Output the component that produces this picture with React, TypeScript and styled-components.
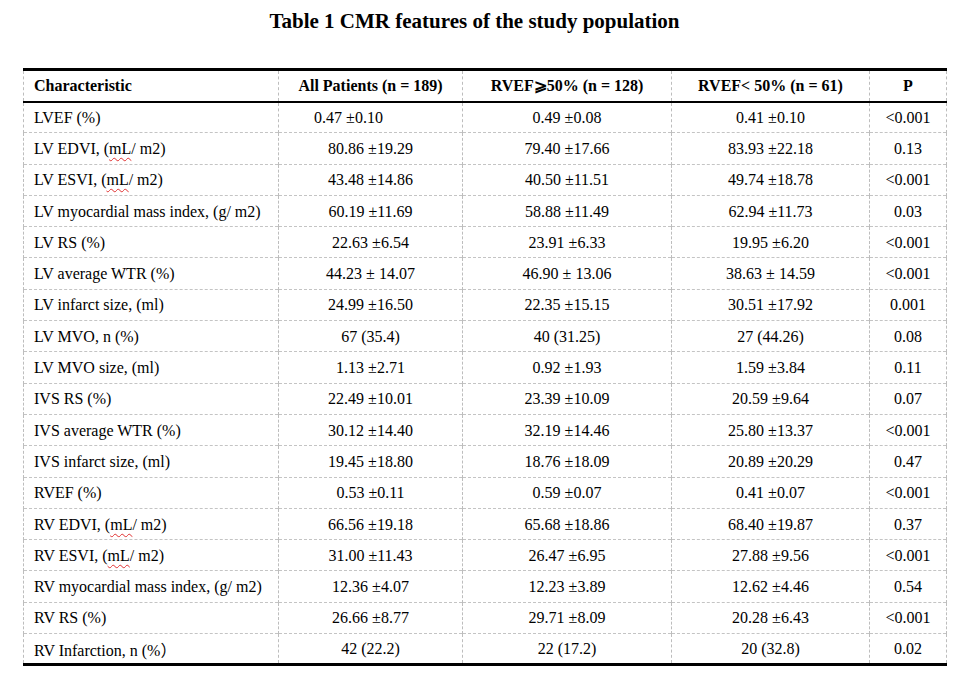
import styled, { createGlobalStyle } from "styled-components";

const GlobalStyle = createGlobalStyle`
  body {
    margin: 0;
    background: #ffffff;
    font-family: "Liberation Serif", "Times New Roman", "Noto Sans CJK SC", serif;
    color: #000000;
  }
`;

type Row = {
  label: React.ReactNode;
  all: string;
  preserved: string;
  reduced: string;
  p: string;
  shiftAll?: boolean;
};

const Squiggle = styled.span`
  text-decoration: underline wavy #e03030;
  text-decoration-thickness: 1px;
  text-underline-offset: 3px;
`;

const rows: Row[] = [
  { label: "LVEF (%)", all: "0.47 ±0.10", preserved: "0.49 ±0.08", reduced: "0.41 ±0.10", p: "<0.001", shiftAll: true },
  { label: <>LV EDVI, (<Squiggle>mL</Squiggle>/ m2)</>, all: "80.86 ±19.29", preserved: "79.40 ±17.66", reduced: "83.93 ±22.18", p: "0.13" },
  { label: <>LV ESVI, (<Squiggle>mL</Squiggle>/ m2)</>, all: "43.48 ±14.86", preserved: "40.50 ±11.51", reduced: "49.74 ±18.78", p: "<0.001" },
  { label: "LV myocardial mass index, (g/ m2)", all: "60.19 ±11.69", preserved: "58.88 ±11.49", reduced: "62.94 ±11.73", p: "0.03" },
  { label: "LV RS (%)", all: "22.63 ±6.54", preserved: "23.91 ±6.33", reduced: "19.95 ±6.20", p: "<0.001" },
  { label: "LV average WTR (%)", all: "44.23 ± 14.07", preserved: "46.90 ± 13.06", reduced: "38.63 ± 14.59", p: "<0.001" },
  { label: "LV infarct size, (ml)", all: "24.99 ±16.50", preserved: "22.35 ±15.15", reduced: "30.51 ±17.92", p: "0.001" },
  { label: "LV MVO, n (%)", all: "67 (35.4)", preserved: "40 (31.25)", reduced: "27 (44.26)", p: "0.08" },
  { label: "LV MVO size, (ml)", all: "1.13 ±2.71", preserved: "0.92 ±1.93", reduced: "1.59 ±3.84", p: "0.11" },
  { label: "IVS RS (%)", all: "22.49 ±10.01", preserved: "23.39 ±10.09", reduced: "20.59 ±9.64", p: "0.07" },
  { label: "IVS average WTR (%)", all: "30.12 ±14.40", preserved: "32.19 ±14.46", reduced: "25.80 ±13.37", p: "<0.001" },
  { label: "IVS infarct size, (ml)", all: "19.45 ±18.80", preserved: "18.76 ±18.09", reduced: "20.89 ±20.29", p: "0.47" },
  { label: "RVEF (%)", all: "0.53 ±0.11", preserved: "0.59 ±0.07", reduced: "0.41 ±0.07", p: "<0.001" },
  { label: <>RV EDVI, (<Squiggle>mL</Squiggle>/ m2)</>, all: "66.56 ±19.18", preserved: "65.68 ±18.86", reduced: "68.40 ±19.87", p: "0.37" },
  { label: <>RV ESVI, (<Squiggle>mL</Squiggle>/ m2)</>, all: "31.00 ±11.43", preserved: "26.47 ±6.95", reduced: "27.88 ±9.56", p: "<0.001" },
  { label: "RV myocardial mass index, (g/ m2)", all: "12.36 ±4.07", preserved: "12.23 ±3.89", reduced: "12.62 ±4.46", p: "0.54" },
  { label: "RV RS (%)", all: "26.66 ±8.77", preserved: "29.71 ±8.09", reduced: "20.28 ±6.43", p: "<0.001" },
  { label: "RV Infarction, n (%）", all: "42 (22.2)", preserved: "22 (17.2)", reduced: "20 (32.8)", p: "0.02" },
];

export default function App() {
  return (
    <>
      <GlobalStyle />
      <Page>
        <Title>Table 1 CMR features of the study population</Title>
        <Table>
          <colgroup>
            <col style={{ width: 255 }} />
            <col style={{ width: 184 }} />
            <col style={{ width: 209 }} />
            <col style={{ width: 198 }} />
            <col style={{ width: 77 }} />
          </colgroup>
          <thead>
            <HeadRow>
              <HeadCell $align="left">Characteristic</HeadCell>
              <HeadCell>All Patients (n = 189)</HeadCell>
              <HeadCell>RVEF⩾50% (n = 128)</HeadCell>
              <HeadCell>RVEF&lt; 50% (n = 61)</HeadCell>
              <HeadCell>P</HeadCell>
            </HeadRow>
          </thead>
          <tbody>
            {rows.map((r, i) => (
              <BodyRow key={i}>
                <Cell $align="left">{r.label}</Cell>
                <Cell $shift={r.shiftAll}>{r.all}</Cell>
                <Cell>{r.preserved}</Cell>
                <Cell>{r.reduced}</Cell>
                <Cell>{r.p}</Cell>
              </BodyRow>
            ))}
          </tbody>
        </Table>
      </Page>
    </>
  );
}

const Page = styled.div`
  width: 956px;
  height: 678px;
  padding: 8px 0 0 23px;
  box-sizing: border-box;
  background: #ffffff;
`;

const Title = styled.h1`
  margin: 0 0 34px 0;
  width: 923px;
  padding-right: 20px;
  box-sizing: border-box;
  text-align: center;
  font-size: 21px;
  line-height: 26px;
  font-weight: bold;
`;

const Table = styled.table`
  width: 923px;
  table-layout: fixed;
  border-collapse: collapse;
  border-top: 3px solid #000000;
  border-bottom: 3px solid #000000;
  font-size: 16px;
`;

const HeadRow = styled.tr`
  height: 32px;
  border-bottom: 2px solid #000000;
`;

const HeadCell = styled.th<{ $align?: "left" | "center" }>`
  padding: 0 10px;
  text-align: ${(p) => p.$align ?? "center"};
  font-weight: bold;
  border-left: 1px dashed #bdbdbd;
  border-right: 1px dashed #bdbdbd;
  white-space: nowrap;
`;

const BodyRow = styled.tr`
  height: 31.3px;
  border-top: 1px dashed #c4c4c4;

  &:first-child {
    border-top: none;
  }
`;

const Cell = styled.td<{ $align?: "left" | "center"; $shift?: boolean }>`
  padding: ${(p) => (p.$shift ? "1px 54px 0 10px" : "1px 10px 0")};
  text-align: ${(p) => p.$align ?? "center"};
  border-left: 1px dashed #bdbdbd;
  border-right: 1px dashed #bdbdbd;
  white-space: nowrap;
`;
